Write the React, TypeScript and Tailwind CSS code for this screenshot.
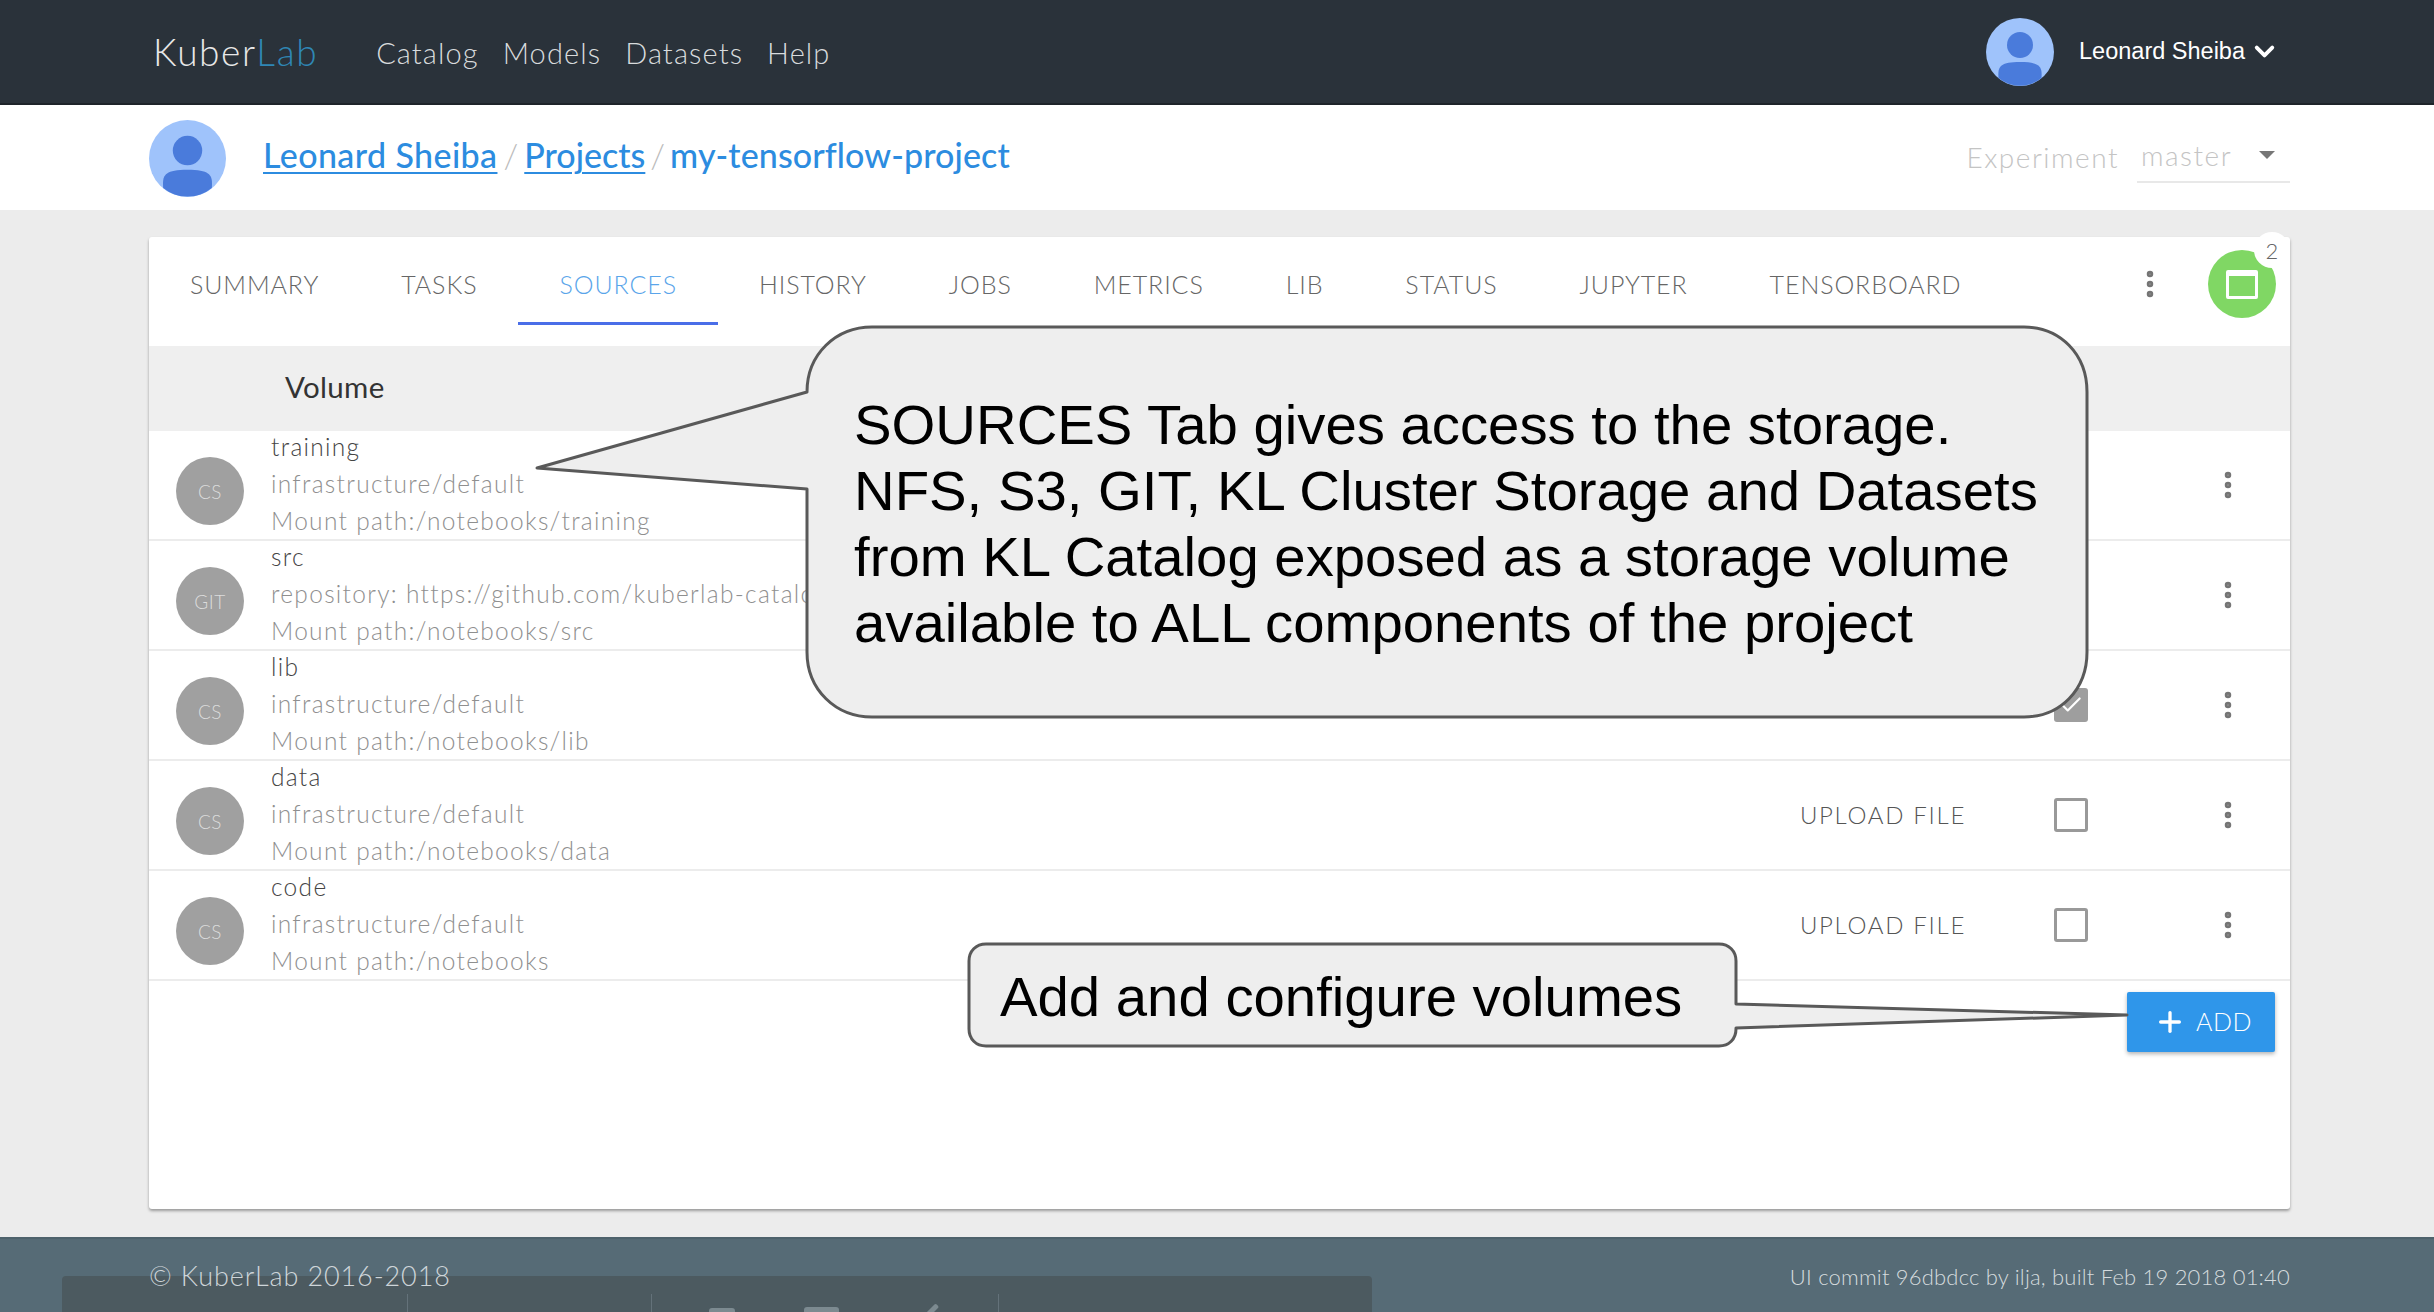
import { ChevronDown, Plus, Check, MoreVertical } from "lucide-react";

interface Volume {
  badge: string;
  name: string;
  detail: string;
  mount: string;
  upload?: boolean;
  checked?: boolean;
}

const tabs = [
  "SUMMARY",
  "TASKS",
  "SOURCES",
  "HISTORY",
  "JOBS",
  "METRICS",
  "LIB",
  "STATUS",
  "JUPYTER",
  "TENSORBOARD",
];

const volumes: Volume[] = [
  { badge: "CS", name: "training", detail: "infrastructure/default", mount: "Mount path:/notebooks/training" },
  { badge: "GIT", name: "src", detail: "repository: https://github.com/kuberlab-catalog", mount: "Mount path:/notebooks/src" },
  { badge: "CS", name: "lib", detail: "infrastructure/default", mount: "Mount path:/notebooks/lib", checked: true },
  { badge: "CS", name: "data", detail: "infrastructure/default", mount: "Mount path:/notebooks/data", upload: true },
  { badge: "CS", name: "code", detail: "infrastructure/default", mount: "Mount path:/notebooks", upload: true },
];

function UserAvatar({ className }: { className: string }) {
  return (
    <svg viewBox="0 0 68 68" className={className}>
      <circle cx="34" cy="34" r="34" fill="#9fc3fb" />
      <circle cx="34" cy="27" r="13" fill="#4a7bdb" />
      <path d="M12.5 60 C12 50 12 44 34 44 C56 44 56 50 55.5 60 A34 34 0 0 1 12.5 60 Z" fill="#4a7bdb" />
    </svg>
  );
}

function Kebab() {
  return <MoreVertical size={34} strokeWidth={2.6} className="text-[#757575]" />;
}

function VolumeRow({ volume }: { volume: Volume }) {
  return (
    <div className="flex h-[110px] items-center border-b-2 border-[#ececec] pl-[27px] pr-[45px]">
      <div className="mt-[12px] flex h-[68px] w-[68px] shrink-0 items-center justify-center rounded-full bg-[#a0a0a0] pt-[2px] text-[19px] font-light tracking-[0.5px] text-[#dcdcdc]">
        {volume.badge}
      </div>
      <div className="-mt-[3px] ml-[27px] flex min-w-0 flex-col text-[24.5px] font-light leading-[37px] tracking-[1.3px]">
        <span className="text-[#444]">{volume.name}</span>
        <span className="whitespace-nowrap text-[#8f8f8f]">{volume.detail}</span>
        <span className="whitespace-nowrap text-[#8f8f8f]">{volume.mount}</span>
      </div>
      <div className="ml-auto flex items-center">
        {volume.upload && (
          <span className="mr-[88px] text-[24px] font-light tracking-[1.7px] text-[#555]">UPLOAD FILE</span>
        )}
        {volume.checked ? (
          <span className="flex h-[34px] w-[34px] items-center justify-center rounded-[3px] bg-[#9e9e9e]">
            <Check size={26} strokeWidth={2} className="text-white" />
          </span>
        ) : volume.upload ? (
          <span className="h-[34px] w-[34px] rounded-[3px] border-[3px] border-[#999]" />
        ) : (
          <span className="h-[34px] w-[34px]" />
        )}
        <span className="ml-[123px]">
          <Kebab />
        </span>
      </div>
    </div>
  );
}

export default function App() {
  return (
    <div
      className="relative flex h-[1312px] flex-col overflow-hidden bg-[#ececec]"
      style={{ fontFamily: "Lato, 'Open Sans', sans-serif" }}
    >
      <header className="flex h-[105px] shrink-0 items-center border-b-2 border-[#1e242a] bg-[#2a323a] pl-[153px] pr-[154px]">
        <div className="text-[37px] font-light tracking-[1.6px] text-[#e8e8e8]">
          Kuber<span className="text-[#2f87b5]">Lab</span>
        </div>
        <nav className="ml-[58px] mt-[3px] flex gap-[24px] text-[29px] font-light tracking-[1.1px] text-[#d8dbdd]">
          <span>Catalog</span>
          <span>Models</span>
          <span>Datasets</span>
          <span>Help</span>
        </nav>
        <div className="ml-auto flex items-center">
          <UserAvatar className="h-[68px] w-[68px]" />
          <span className="ml-[25px] text-[23.5px] text-white" style={{ fontFamily: "'Liberation Sans', sans-serif" }}>
            Leonard Sheiba
          </span>
          <ChevronDown size={31} strokeWidth={3} className="ml-[4px] text-white" />
        </div>
      </header>

      <div className="flex h-[105px] shrink-0 items-center bg-white pl-[149px] pr-[144px]">
        <UserAvatar className="mt-[2px] h-[77px] w-[77px]" />
        <div className="-mt-[6px] ml-[37px] flex items-center text-[34px] font-medium text-[#2c8ce0]">
          <span className="tracking-[0.4px] underline decoration-2 underline-offset-4">Leonard Sheiba</span>
          <span className="mx-[6px] font-light text-[#bbb]">/</span>
          <span className="underline decoration-2 underline-offset-4">Projects</span>
          <span className="mx-[5px] font-light text-[#bbb]">/</span>
          <span className="tracking-[0.1px]">my-tensorflow-project</span>
        </div>
        <div className="ml-auto flex items-center text-[28px] font-light tracking-[1.5px] text-[#c4c4c4]">
          <span className="-mt-[2px]">Experiment</span>
          <div className="ml-[18px] flex h-[50px] w-[153px] items-center justify-between border-b-2 border-[#e8e8e8] pb-[3px] pl-[4px] pr-[15px]">
            <span>master</span>
            <span className="h-0 w-0 border-x-[8px] border-t-[8px] border-x-transparent border-t-[#777]" />
          </div>
        </div>
      </div>

      <main className="flex-1 pb-[28px] pl-[149px] pr-[144px] pt-[27px]">
        <div className="flex h-full flex-col rounded-[3px] bg-white shadow-[0_2px_3px_rgba(0,0,0,0.35)]">
          <div className="mb-[21px] flex h-[88px] shrink-0 items-stretch">
            {tabs.map((tab) => (
              <div
                key={tab}
                className={
                  tab === "SOURCES"
                    ? "flex items-center border-b-[3px] border-[#4a6ee8] px-[41px] pt-[11px] text-[25px] font-light tracking-[0.9px] text-[#5aa5ea]"
                    : "flex items-center border-b-[3px] border-transparent px-[41px] pt-[11px] text-[25px] font-light tracking-[0.9px] text-[#666]"
                }
              >
                {tab}
              </div>
            ))}
            <div className="ml-auto flex items-center pr-[14px] pt-[6px]">
              <Kebab />
              <div className="relative ml-[41px] flex h-[68px] w-[68px] items-center justify-center rounded-full bg-[#80d764]">
                <span className="h-[29px] w-[32px] rounded-[2px] border-[3px] border-t-[6px] border-white" />
                <span className="absolute -right-[14px] -top-[18px] flex h-[36px] w-[36px] items-center justify-center rounded-full bg-white text-[22px] font-light text-[#666]">
                  2
                </span>
              </div>
            </div>
          </div>

          <div className="flex h-[85px] shrink-0 items-center bg-[#efefef] pb-[3px] pl-[136px] text-[29.5px] tracking-[0.3px] text-[#333]">
            Volume
          </div>

          {volumes.map((volume) => (
            <VolumeRow key={volume.name} volume={volume} />
          ))}

          <div className="flex justify-end pr-[15px] pt-[11px]">
            <button className="flex h-[60px] w-[148px] items-center justify-center gap-[10px] rounded-[2px] bg-[#2f96ea] pl-[4px] text-[25px] font-light tracking-[0.6px] text-white shadow-[0_2px_4px_rgba(0,0,0,0.3)]">
              <Plus size={32} strokeWidth={2.5} />
              ADD
            </button>
          </div>
        </div>
      </main>

      <footer className="flex h-[75px] shrink-0 items-center justify-between border-t-2 border-[#4e626c] bg-[#566b76] pl-[149px] pr-[144px]">
        <span className="relative z-10 mt-[2px] text-[27px] font-light tracking-[0.9px] text-[#ced5d9]">© KuberLab 2016-2018</span>
        <span className="mt-[2px] text-[22px] font-light tracking-[0.2px] text-[#d5dbde]">UI commit 96dbdcc by ilja, built Feb 19 2018 01:40</span>
      </footer>

      {/* dock poking up over the footer */}
      <div className="absolute left-[62px] top-[1276px] flex h-[50px] w-[1310px] rounded-[4px] bg-[#4c5a60] pt-[18px]">
        <span className="ml-[345px] h-full w-px bg-[#64727a]" />
        <span className="ml-[243px] h-full w-px bg-[#64727a]" />
        <span className="ml-[346px] h-full w-px bg-[#64727a]" />
        <span className="absolute left-[647px] top-[32px] h-[10px] w-[26px] rounded-t-[3px] bg-[#7c8a90]" />
        <span className="absolute left-[742px] top-[31px] h-[10px] w-[35px] rounded-t-[3px] bg-[#7c8a90]" />
        <span className="absolute left-[860px] top-[33px] h-[5px] w-[18px] -rotate-45 rounded-[2px] bg-[#7c8a90]" />
      </div>

      {/* callouts */}
      <svg className="pointer-events-none absolute left-0 top-0 h-[1312px] w-[2434px]" viewBox="0 0 2434 1312">
        <path
          d="M807 392 C807 354 836 327 872 327 L2024 327 C2060 327 2087 354 2087 392 L2087 652 C2087 690 2060 717 2024 717 L872 717 C836 717 807 690 807 652 L807 489 L537 468 Z"
          fill="#eeeeee"
          stroke="#595959"
          strokeWidth="3"
          strokeLinejoin="round"
        />
        <path
          d="M986 944 L1719 944 C1729 944 1736 951 1736 961 L1736 1004 L2127 1015 L1736 1028 L1736 1029 C1736 1039 1729 1046 1719 1046 L986 1046 C976 1046 969 1039 969 1029 L969 961 C969 951 976 944 986 944 Z"
          fill="#eeeeee"
          stroke="#595959"
          strokeWidth="3"
          strokeLinejoin="round"
        />
      </svg>
      <div
        className="absolute left-[854px] top-[392px] whitespace-nowrap text-[56.3px] leading-[66px] text-black"
        style={{ fontFamily: "'Liberation Sans', sans-serif" }}
      >
        SOURCES Tab gives access to the storage.
        <br />
        NFS, S3, GIT, KL Cluster Storage and Datasets
        <br />
        from KL Catalog exposed as a storage volume
        <br />
        available to ALL components of the project
      </div>
      <div
        className="absolute left-[1000px] top-[964px] whitespace-nowrap text-[56.3px] leading-[66px] text-black"
        style={{ fontFamily: "'Liberation Sans', sans-serif" }}
      >
        Add and configure volumes
      </div>
    </div>
  );
}
